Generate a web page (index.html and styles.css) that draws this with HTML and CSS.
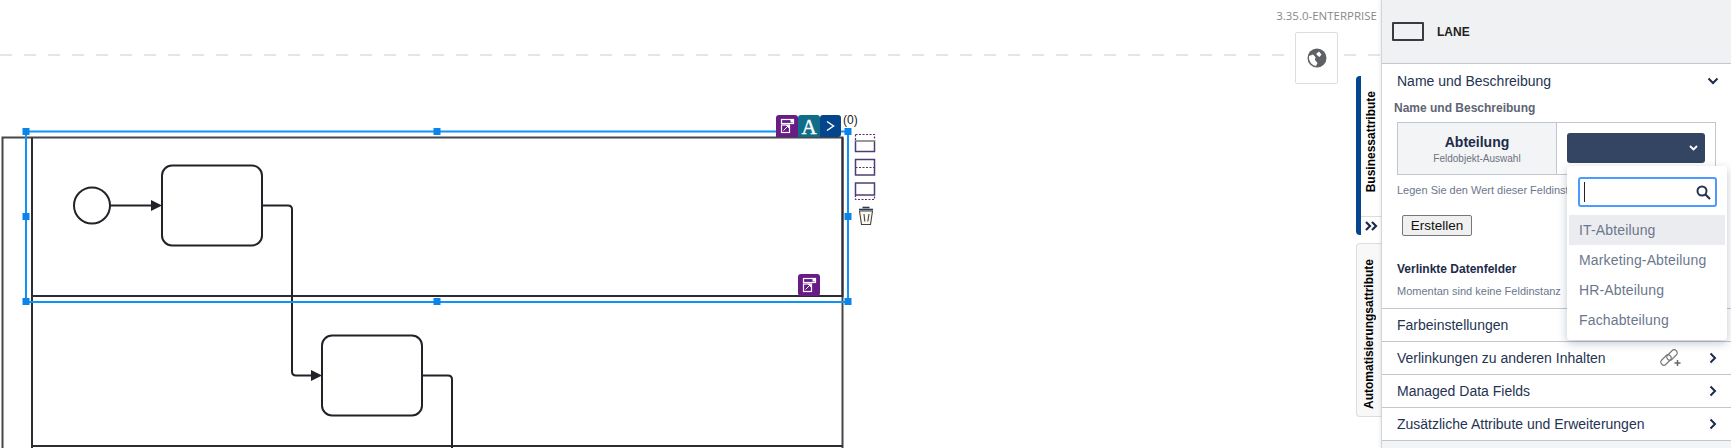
FILE: index.html
```html
<!DOCTYPE html>
<html lang="de">
  <head>
    <meta charset="UTF-8" />
    <meta name="viewport" content="width=device-width, initial-scale=1.0" />
    <title>Lane</title>
    <link rel="stylesheet" href="styles.css">
  </head>
  <body>
    <div class="app">
      <main class="stage">
        <svg class="canvas" width="1381" height="448" viewBox="0 0 1381 448">
          <defs>
            <g id="edit-icon">
              <rect x="-5.5" y="-6.5" width="12" height="4" fill="none" stroke="#fff" stroke-width="1.2" />
              <rect x="3.5" y="-6" width="2.5" height="2.5" fill="#fff" />
              <rect x="-5.5" y="-1" width="8" height="7.5" fill="none" stroke="#fff" stroke-width="1.2" />
              <path d="M-3.5 4.5 L1 0 M-1 -0.5 H1.5 V2" fill="none" stroke="#fff" stroke-width="1" />
            </g>
          </defs>

          <line class="ruler" x1="0" y1="55" x2="1381" y2="55" />

          <!-- pool and lanes -->
          <path class="pool" d="M2.5 448 V137.5 H842.5 V448" />
          <path class="lane" d="M32 448 V137.5 M32 296 H842.5 V137.5 M32 446 H842.5" />

          <!-- process -->
          <circle class="shape" cx="92" cy="205.5" r="18" />
          <rect class="shape" x="162" y="165.5" width="100" height="80" rx="10" />
          <rect class="shape" x="322" y="335.5" width="100" height="80" rx="10" />
          <path class="flow" d="M110 205.5 H152" />
          <path class="head" d="M151 200 L162 205.5 L151 211 Z" />
          <path class="flow" d="M262 205.5 H288 Q292 205.5 292 209.5 V371.5 Q292 375.5 296 375.5 H312" />
          <path class="head" d="M311 370 L322 375.5 L311 381 Z" />
          <path class="flow" d="M422 375.5 H448 Q452 375.5 452 379.5 V448" />

          <!-- selection -->
          <rect class="sel" x="26" y="131.5" width="822" height="170.5" />
          <rect class="handle" x="22.5" y="128" width="7" height="7" />
          <rect class="handle" x="433.5" y="128" width="7" height="7" />
          <rect class="handle" x="844.5" y="128" width="7" height="7" />
          <rect class="handle" x="22.5" y="213" width="7" height="7" />
          <rect class="handle" x="844.5" y="213" width="7" height="7" />
          <rect class="handle" x="22.5" y="298" width="7" height="7" />
          <rect class="handle" x="433.5" y="298" width="7" height="7" />
          <rect class="handle" x="844.5" y="298" width="7" height="7" />

          <!-- element toolbar -->
          <path d="M779 115 H795 Q798 115 798 118 V137 H776 V118 Q776 115 779 115 Z" fill="#691c85" />
          <use href="#edit-icon" x="787" y="126" />
          <path d="M801 115 H817 Q820 115 820 118 V137 H798 V118 Q798 115 801 115 Z" fill="#0f6d89" />
          <text class="tool-a" x="809" y="134">A</text>
          <path d="M823 115 H838 Q841 115 841 118 V134 Q841 137 838 137 H820 V118 Q820 115 823 115 Z" fill="#04458c" />
          <path d="M827 121.5 L833.5 126 L827 130.5" fill="none" stroke="#fff" stroke-width="1.5" />
          <text class="count" x="843" y="124">(0)</text>

          <rect class="mini" x="855.5" y="141" width="19" height="10.5" />
          <path d="M855.5 141 H874.5" stroke="#999" stroke-width="2" />
          <path class="mini-dash" d="M855.5 134.5 H874.5 V140 M855.5 134.5 V140" />
          <rect class="mini" x="855.5" y="159.5" width="19" height="15.5" />
          <path class="mini-dash" d="M855.5 167.5 H874.5" />
          <rect class="mini" x="855.5" y="183" width="19" height="12" />
          <path class="mini-dash" d="M855.5 195 V199.5 H874.5 V195" />

          <path d="M859 209.5 H873" stroke="#2c3a55" stroke-width="1.6" />
          <path d="M862.5 207.5 H869.5" stroke="#2c3a55" stroke-width="1.6" />
          <path d="M859.5 211 L861.5 224.5 H870.5 L872.5 211 Z" fill="#fdf8ee" stroke="#444" stroke-width="1.1" />
          <path d="M864 214 L864.8 221.5 M869 214 L867.8 221.5" fill="none" stroke="#444" stroke-width="1.1" />

          <rect x="798" y="274" width="22" height="22" rx="3" fill="#691c85" />
          <use href="#edit-icon" x="809" y="285" />
        </svg>

        <div class="version">3.35.0-ENTERPRISE</div>
        <button class="globe-btn" type="button">
          <svg width="20" height="20" viewBox="0 0 20 20">
            <circle cx="10" cy="10" r="9.5" fill="#5f5f66" />
            <path d="M2 8 L6 6.5 L8.5 9 L8 12 L10.5 15 L9 18 Q3.5 17 2 11 Z" fill="#fff" />
            <path d="M9 6 L12 3.5 L14.5 6.5 L12.5 9 L11 8 Z" fill="#fff" />
          </svg>
        </button>

        <div class="tab tab-active">
          <span class="tab-label">Businessattribute</span>
          <span class="tab-toggle">
            <svg width="13" height="10" viewBox="0 0 13 10">
              <path d="M1 1 L5 5 L1 9 M7 1 L11 5 L7 9" fill="none" stroke="#1d2b4a" stroke-width="2.2" />
            </svg>
          </span>
        </div>
        <div class="tab tab-second">
          <span class="tab-label">Automatisierungsattribute</span>
        </div>
      </main>

      <aside class="panel">
        <header class="panel-head">
          <span class="lane-icon"></span>
          <span class="panel-title">LANE</span>
        </header>

        <section class="section-open">
          <div class="row-title">
            <span>Name und Beschreibung</span>
            <svg class="chev" width="12" height="8" viewBox="0 0 12 8">
              <path d="M1.5 1.5 L6 6 L10.5 1.5" fill="none" stroke="#1d2b4a" stroke-width="2" />
            </svg>
          </div>
          <div class="sub-title">Name und Beschreibung</div>
          <div class="field">
            <div class="field-name">
              <strong>Abteilung</strong>
              <small>Feldobjekt-Auswahl</small>
            </div>
            <div class="field-value">
              <div class="select-btn">
                <svg width="9" height="6" viewBox="0 0 9 6">
                  <path d="M1 1 L4.5 4.5 L8 1" fill="none" stroke="#fff" stroke-width="1.8" />
                </svg>
              </div>
            </div>
          </div>
          <p class="hint">Legen Sie den Wert dieser Feldinst</p>
          <button class="create-btn" type="button">Erstellen</button>
          <h4 class="linked-title">Verlinkte Datenfelder</h4>
          <p class="linked-text">Momentan sind keine Feldinstanz</p>
        </section>

        <div class="row">
          <span>Farbeinstellungen</span>
        </div>
        <div class="row">
          <span>Verlinkungen zu anderen Inhalten</span>
          <svg class="link-icon" width="22" height="18" viewBox="0 0 22 18">
            <rect x="1" y="8" width="12" height="6" rx="3" transform="rotate(-45 7 11)" fill="none" stroke="#777" stroke-width="1.1" />
            <rect x="7" y="3" width="12" height="6" rx="3" transform="rotate(-45 13 6)" fill="none" stroke="#777" stroke-width="1.1" />
            <path d="M15.5 14 H21.5 M18.5 11 V17" stroke="#666" stroke-width="1.5" />
          </svg>
          <svg class="chev" width="8" height="12" viewBox="0 0 8 12">
            <path d="M1.5 1.5 L6 6 L1.5 10.5" fill="none" stroke="#1d2b4a" stroke-width="2" />
          </svg>
        </div>
        <div class="row">
          <span>Managed Data Fields</span>
          <svg class="chev" width="8" height="12" viewBox="0 0 8 12">
            <path d="M1.5 1.5 L6 6 L1.5 10.5" fill="none" stroke="#1d2b4a" stroke-width="2" />
          </svg>
        </div>
        <div class="row">
          <span>Zusätzliche Attribute und Erweiterungen</span>
          <svg class="chev" width="8" height="12" viewBox="0 0 8 12">
            <path d="M1.5 1.5 L6 6 L1.5 10.5" fill="none" stroke="#1d2b4a" stroke-width="2" />
          </svg>
        </div>

        <div class="dropdown">
          <div class="search">
            <span class="caret"></span>
            <svg width="15" height="15" viewBox="0 0 15 15">
              <circle cx="6" cy="6" r="4.5" fill="none" stroke="#253352" stroke-width="2" />
              <path d="M9.5 9.5 L14 14" stroke="#253352" stroke-width="2.2" />
            </svg>
          </div>
          <ul class="options">
            <li class="option-active">IT-Abteilung</li>
            <li>Marketing-Abteilung</li>
            <li>HR-Abteilung</li>
            <li>Fachabteilung</li>
          </ul>
        </div>
      </aside>
    </div>
  </body>
</html>
```

FILE: styles.css
```css
* {
  box-sizing: border-box;
}
html,
body {
  margin: 0;
  height: 448px;
  overflow: hidden;
  background: #fff;
  font-family: "Liberation Sans", Arial, sans-serif;
  color: #1d2b4a;
}
.app {
  display: flex;
  height: 448px;
}
.stage {
  position: relative;
  flex: 1;
}
.canvas {
  position: absolute;
  left: 0;
  top: 0;
}
.ruler {
  stroke: #ddd;
  stroke-width: 1.5;
  stroke-dasharray: 12 12;
}
.pool {
  fill: none;
  stroke: #46464c;
  stroke-width: 2;
}
.lane {
  fill: none;
  stroke: #2c2c32;
  stroke-width: 2;
}
.shape {
  fill: #fff;
  stroke: #222228;
  stroke-width: 2;
}
.flow {
  fill: none;
  stroke: #222228;
  stroke-width: 2;
}
.head {
  fill: #222228;
}
.sel {
  fill: none;
  stroke: #0f93f5;
  stroke-width: 2;
}
.handle {
  fill: #0a84ea;
}
.tool-a {
  font-family: "Liberation Serif", serif;
  font-size: 21px;
  text-anchor: middle;
  fill: #fff;
  stroke: #fff;
  stroke-width: 0.4;
}
.count {
  font-size: 12px;
  fill: #222;
}
.mini {
  fill: #fff;
  stroke: #4d3f72;
  stroke-width: 1.5;
}
.mini-dash {
  fill: none;
  stroke: #5d2d6d;
  stroke-width: 1.2;
  stroke-dasharray: 2 1.5;
}
.version {
  position: absolute;
  right: 4px;
  top: 8px;
  font-family: "Open Sans", sans-serif;
  font-size: 11.5px;
  line-height: 16px;
  color: #888;
}
.globe-btn {
  position: absolute;
  left: 1295px;
  top: 32px;
  display: flex;
  align-items: center;
  justify-content: center;
  width: 43px;
  height: 52px;
  padding: 0;
  background: #fff;
  border: 1px solid #ddd;
  border-radius: 2px;
}
.tab {
  position: absolute;
  left: 1356px;
  width: 25px;
  background: #f8f8f9;
  border: 1px solid #ddd;
  border-right: 0;
  border-radius: 4px 0 0 4px;
}
.tab-active {
  top: 76px;
  height: 159px;
  padding-top: 15px;
  background: #fff;
  border: 0;
  border-left: 5px solid #04458c;
}
.tab-second {
  top: 243px;
  height: 174px;
  padding-top: 15px;
}
.tab-label {
  display: block;
  writing-mode: vertical-rl;
  transform: rotate(180deg);
  margin: 0 auto;
  font-size: 12px;
  font-weight: bold;
  line-height: 20px;
  color: #000;
  white-space: nowrap;
}
.tab-toggle {
  position: absolute;
  left: 0;
  right: 0;
  bottom: 0;
  display: flex;
  align-items: center;
  justify-content: center;
  height: 19px;
  border-top: 1px solid #ddd;
}
.panel {
  position: relative;
  flex: none;
  width: 350px;
  height: 448px;
  background: #f3f4f6;
  border-left: 1px solid #d4d5da;
  box-shadow: -1px 0 3px rgba(0, 0, 0, 0.08);
}
.panel-head {
  display: flex;
  align-items: center;
  gap: 13px;
  height: 64px;
  padding-left: 10px;
  background: #f0f1f3;
  border-bottom: 1px solid #c1c7d0;
}
.lane-icon {
  width: 32px;
  height: 19px;
  border: 2px solid #3a3a40;
  border-radius: 1px;
}
.panel-title {
  font-size: 12px;
  font-weight: bold;
  color: #222;
}
.section-open {
  height: 245px;
  padding: 0 15px;
  background: #fff;
  border-bottom: 1px solid #c1c7d0;
}
.row-title {
  display: flex;
  align-items: center;
  justify-content: space-between;
  height: 34px;
  margin-right: -3px;
  font-size: 14px;
  color: #253352;
}
.sub-title {
  margin: 3px 0 7px -3px;
  font-size: 12px;
  font-weight: bold;
  line-height: 14px;
  color: #5e6573;
}
.field {
  display: flex;
  width: 319px;
  height: 53px;
  border: 1px solid #c1c7d0;
}
.field-name {
  display: flex;
  flex-direction: column;
  align-items: center;
  justify-content: center;
  gap: 3px;
  width: 159px;
  background: #f3f4f6;
  border-right: 1px solid #c1c7d0;
}
.field-name strong {
  font-size: 14px;
  color: #1d2b4a;
}
.field-name small {
  font-size: 10px;
  color: #6b7280;
}
.field-value {
  flex: 1;
  padding: 10px;
}
.select-btn {
  display: flex;
  align-items: center;
  justify-content: flex-end;
  height: 30px;
  padding-right: 7px;
  background: #344563;
  border-radius: 3px;
}
.hint,
.linked-text {
  margin: 0;
  font-size: 11px;
  color: #6b778c;
  white-space: nowrap;
}
.hint {
  margin-top: 9px;
  line-height: 13px;
}
.create-btn {
  display: block;
  width: 70px;
  height: 21px;
  margin: 18px 0 0 5px;
  padding: 0;
  font-family: inherit;
  font-size: 13.5px;
  color: #111;
  background: #f0f0f0;
  border: 1px solid #777;
  border-radius: 2px;
}
.linked-title {
  margin: 26px 0 0;
  font-size: 12px;
  line-height: 14px;
  color: #1d2b4a;
}
.linked-text {
  margin-top: 9px;
  line-height: 13px;
}
.row {
  display: flex;
  align-items: center;
  justify-content: space-between;
  height: 33px;
  padding: 0 14px 0 15px;
  font-size: 14px;
  color: #253352;
  background: #fff;
  border-bottom: 1px solid #c1c7d0;
}
.link-icon {
  margin-left: auto;
  margin-right: 28px;
}
.dropdown {
  position: absolute;
  left: 185px;
  top: 166px;
  width: 160px;
  height: 174px;
  padding-top: 11px;
  background: #fff;
  border-radius: 3px;
  box-shadow: 0 3px 10px rgba(9, 30, 66, 0.25);
}
.search {
  display: flex;
  align-items: center;
  justify-content: space-between;
  width: 139px;
  height: 30px;
  margin-left: 11px;
  padding: 0 4px;
  background: #fff;
  border: 2px solid #4c9aff;
  border-radius: 3px;
}
.caret {
  width: 1px;
  height: 20px;
  background: #222;
}
.options {
  margin: 8px 0 0;
  padding: 0;
  list-style: none;
}
.options li {
  height: 30px;
  margin: 0 2px;
  padding-left: 10px;
  font-size: 14px;
  letter-spacing: 0.15px;
  line-height: 30px;
  color: #6b778c;
}
.option-active {
  background: #ebecf0;
}
```
